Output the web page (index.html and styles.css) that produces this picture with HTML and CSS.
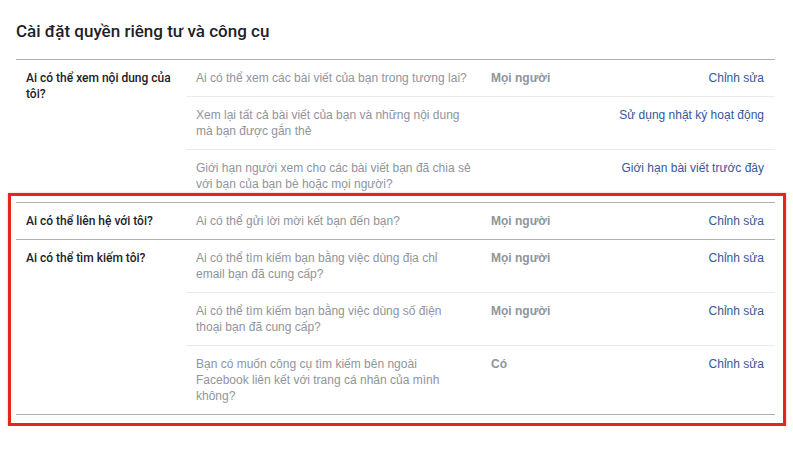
FILE: index.html
```html
<!DOCTYPE html>
<html lang="vi">
<head>
  <meta charset="UTF-8" />
  <meta name="viewport" content="width=device-width, initial-scale=1.0" />
  <title>Cài đặt quyền riêng tư và công cụ</title>
  <link rel="stylesheet" href="styles.css">
</head>
<body>
  <div class="page">
    <h1>Cài đặt quyền riêng tư và công cụ</h1>

    <div class="section">
      <div class="label">Ai có thể xem nội dung của tôi?</div>
      <div class="rows">
        <div class="row">
          <div class="question">Ai có thể xem các bài viết của bạn trong tương lai?</div>
          <div class="value">Mọi người</div>
          <a class="action" href="#">Chỉnh sửa</a>
        </div>
        <div class="row">
          <div class="question">Xem lại tất cả bài viết của bạn và những nội dung<br>mà bạn được gắn thẻ</div>
          <div class="value"></div>
          <a class="action" href="#">Sử dụng nhật ký hoạt động</a>
        </div>
        <div class="row">
          <div class="question">Giới hạn người xem cho các bài viết bạn đã chia sẻ<br>với bạn của bạn bè hoặc mọi người?</div>
          <div class="value"></div>
          <a class="action" href="#">Giới hạn bài viết trước đây</a>
        </div>
      </div>
    </div>

    <div class="highlight">
      <div class="section">
        <div class="label">Ai có thể liên hệ với tôi?</div>
        <div class="rows">
          <div class="row">
            <div class="question">Ai có thể gửi lời mời kết bạn đến bạn?</div>
            <div class="value">Mọi người</div>
            <a class="action" href="#">Chỉnh sửa</a>
          </div>
        </div>
      </div>

      <div class="section last">
        <div class="label">Ai có thể tìm kiếm tôi?</div>
        <div class="rows">
          <div class="row">
            <div class="question">Ai có thể tìm kiếm bạn bằng việc dùng địa chỉ<br>email bạn đã cung cấp?</div>
            <div class="value">Mọi người</div>
            <a class="action" href="#">Chỉnh sửa</a>
          </div>
          <div class="row">
            <div class="question">Ai có thể tìm kiếm bạn bằng việc dùng số điện<br>thoại bạn đã cung cấp?</div>
            <div class="value">Mọi người</div>
            <a class="action" href="#">Chỉnh sửa</a>
          </div>
          <div class="row">
            <div class="question">Bạn có muốn công cụ tìm kiếm bên ngoài<br>Facebook liên kết với trang cá nhân của mình<br>không?</div>
            <div class="value">Có</div>
            <a class="action" href="#">Chỉnh sửa</a>
          </div>
        </div>
      </div>
    </div>
  </div>
</body>
</html>
```

FILE: styles.css
```css
:root {
  --text: #1d2129;
  --muted: #90949c;
  --link: #365899;
  --line: #aeb0b4;
  --line-light: #e9ebee;
  --mark: #e3261c;
}
* {
  box-sizing: border-box;
}
body {
  margin: 0;
  background: #fff;
  color: var(--text);
  font-family: "Liberation Sans", Arial, sans-serif;
  font-size: 12px;
  line-height: 16px;
}
.page {
  width: 759px;
  margin-left: 16px;
  padding-top: 21px;
}
h1 {
  margin: 0 0 17px;
  font-family: Roboto, "Liberation Sans", sans-serif;
  font-size: 17px;
  line-height: 21px;
  font-weight: 500;
  color: var(--text);
}
.section {
  display: grid;
  grid-template-columns: 170px 1fr;
  border-top: 1px solid var(--line);
}
.section.last {
  border-bottom: 1px solid var(--line);
}
.label {
  padding: 10px 12px 10px 10px;
  font-family: Roboto, "Liberation Sans", sans-serif;
  font-weight: 500;
}
.row {
  display: grid;
  grid-template-columns: 284px 1fr auto;
  column-gap: 11px;
  padding: 10px 11px 10px 10px;
  border-top: 1px solid var(--line-light);
  color: var(--muted);
}
.row:first-child {
  border-top: none;
}
.value {
  font-weight: 700;
}
.action {
  color: var(--link);
  text-decoration: none;
  text-align: right;
}
.highlight {
  margin: -9px -11px 0 -8px;
  padding: 6px 8px 8px 5px;
  border: 3px solid var(--mark);
  box-shadow: 0 0 2px rgba(227, 38, 28, 0.35);
}
```
